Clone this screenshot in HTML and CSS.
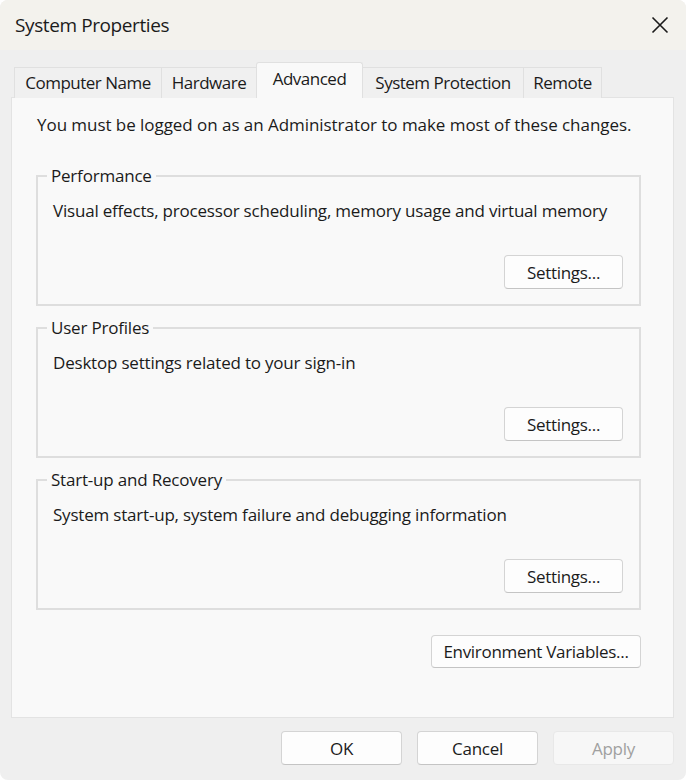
FILE: index.html
```html
<!DOCTYPE html>
<html>
<head>
<meta charset="utf-8">
<link rel="stylesheet" href="styles.css">
</head>
<body>
<div class="window">
  <div class="titlebar">
    <span class="title">System Properties</span>
    <svg class="close" width="18" height="18" viewBox="0 0 18 18"><path d="M1.5 1.5 L16.5 16.5 M16.5 1.5 L1.5 16.5" stroke="#1a1a1a" stroke-width="1.6" fill="none"/></svg>
  </div>
  <div class="body">
    <div class="tabs">
      <div class="tab t-name">Computer Name</div>
      <div class="tab t-hw">Hardware</div>
      <div class="tab active t-adv">Advanced</div>
      <div class="tab t-prot">System Protection</div>
      <div class="tab t-rem">Remote</div>
    </div>
    <div class="panel">
      <p class="notice">You must be logged on as an Administrator to make most of these changes.</p>
      <fieldset class="group">
        <legend>Performance</legend>
        <p class="desc">Visual effects, processor scheduling, memory usage and virtual memory</p>
        <div class="row"><button class="btn settings">Settings...</button></div>
      </fieldset>
      <fieldset class="group">
        <legend>User Profiles</legend>
        <p class="desc">Desktop settings related to your sign-in</p>
        <div class="row"><button class="btn settings">Settings...</button></div>
      </fieldset>
      <fieldset class="group">
        <legend>Start-up and Recovery</legend>
        <p class="desc">System start-up, system failure and debugging information</p>
        <div class="row"><button class="btn settings">Settings...</button></div>
      </fieldset>
      <div class="env-row"><button class="btn env">Environment Variables...</button></div>
    </div>
    <div class="footer">
      <button class="btn foot">OK</button>
      <button class="btn foot">Cancel</button>
      <button class="btn foot disabled">Apply</button>
    </div>
  </div>
</div>
</body>
</html>
```

FILE: styles.css
```css
* { box-sizing: border-box; }
html, body { margin: 0; padding: 0; background: #ffffff; }
body {
  font-family: "Open Sans", "Noto Sans", sans-serif;
  color: #1b1b1b;
  font-size: 17px;
  letter-spacing: -0.2px;
}
.window {
  width: 686px;
  height: 780px;
  border-radius: 8px;
  overflow: hidden;
  background: #efefef;
  display: flex;
  flex-direction: column;
}
.titlebar {
  height: 50px;
  background: #f3f2ed;
  display: flex;
  align-items: center;
  justify-content: space-between;
  padding: 0 17px 0 15px;
}
.title { font-size: 19px; letter-spacing: -0.4px; }
.close { display: block; }
.body { padding: 0 12px 0 11px; flex: 1; }
.tabs {
  display: flex;
  align-items: flex-end;
  padding-left: 3px;
  margin-top: 12px;
  height: 35px;
}
.tab {
  height: 31px;
  line-height: 30px;
  padding: 0;
  text-align: center;
  border: 1px solid #e0e0e0;
  border-bottom: none;
  background: #f0f0f0;
  margin-right: -1px;
  margin-bottom: -1px;
  position: relative;
  letter-spacing: -0.5px;
  white-space: nowrap;
}
.t-name { width: 148px; }
.t-hw { width: 96px; }
.t-adv { width: 107px; }
.t-prot { width: 162px; }
.t-rem { width: 79px; }
.tab.active {
  height: 36px;
  line-height: 32px;
  background: #f9f9f9;
  border-radius: 3px 3px 0 0;
  z-index: 1;
}
.panel {
  height: 621px;
  border: 1px solid #e3e3e3;
  background: #f9f9f9;
  padding: 15px 32px 0 24px;
}
.notice { margin: 0 0 28px 1px; line-height: 23px; letter-spacing: -0.05px; }
.group {
  margin: 0 0 10px 0;
  border: 2px solid #dedede;
  padding: 0 16px 15px 15px;
}
.group legend {
  padding: 0 4px;
  margin-left: -6px;
  line-height: 24px;
}
.desc { margin: 11px 0 0 0; line-height: 24px; }
.row { display: flex; justify-content: flex-end; margin-top: 32px; }
.btn {
  font-family: inherit;
  font-size: 17px;
  letter-spacing: -0.3px;
  color: #1b1b1b;
  background: #fdfdfd;
  border: 1px solid #d4d4d4;
  border-bottom-color: #c4c4c4;
  border-radius: 4px;
  padding: 0;
  height: 34px;
}
.settings { width: 119px; }
.env-row { display: flex; justify-content: flex-end; margin-top: 25px; }
.env { width: 210px; height: 33px; }
.footer {
  display: flex;
  justify-content: flex-end;
  gap: 15px;
  margin-top: 13px;
  padding-right: 0;
}
.foot { width: 121px; height: 34px; }
.foot.disabled {
  color: #a0a0a0;
  background: #f7f7f7;
  border-color: #e8e8e8;
}
```
